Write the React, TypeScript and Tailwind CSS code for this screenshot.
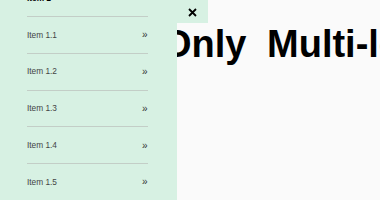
import React from 'react';

const items = ['Item 1.1', 'Item 1.2', 'Item 1.3', 'Item 1.4', 'Item 1.5', 'Item 1.6'];

export default function App() {
  return (
    <div className="relative w-[380px] h-[200px] overflow-hidden bg-[#fafafa] font-['Liberation_Sans',Arial,sans-serif]">
      {/* Page content */}
      <div className="pt-[25px] pl-[162px]">
        <h1 className="text-[38px] leading-[38px] font-bold text-black whitespace-nowrap [word-spacing:10px]">
          Only Multi-level Menu
        </h1>
      </div>

      {/* Side menu */}
      <div className="absolute left-0 top-0 w-[177px] h-[200px] overflow-hidden bg-[#d7f1e3]">
        <ul className="mt-[-19.75px] ml-[27px] w-[121px]">
          <li className="h-[36.75px] flex items-center border-b border-[#c3cec7] text-[8.3px] font-bold text-black">
            Item 1
          </li>
          {items.map((item) => (
            <li
              key={item}
              className="h-[36.75px] flex items-center justify-between border-b border-[#c3cec7]"
            >
              <span className="text-[8.3px] text-[#444]">{item}</span>
              <span className="text-[10px] text-[#333] mr-[0.5px]">»</span>
            </li>
          ))}
        </ul>
      </div>

      {/* Close button */}
      <button className="absolute left-[177px] top-0 w-[31px] h-[23px] bg-[#d7f1e3] flex items-center justify-center">
        <svg width="9" height="9" viewBox="0 0 9 9" className="mt-[1px]">
          <path d="M1 1 L8 8 M8 1 L1 8" stroke="#000" strokeWidth="1.8" />
        </svg>
      </button>
    </div>
  );
}
